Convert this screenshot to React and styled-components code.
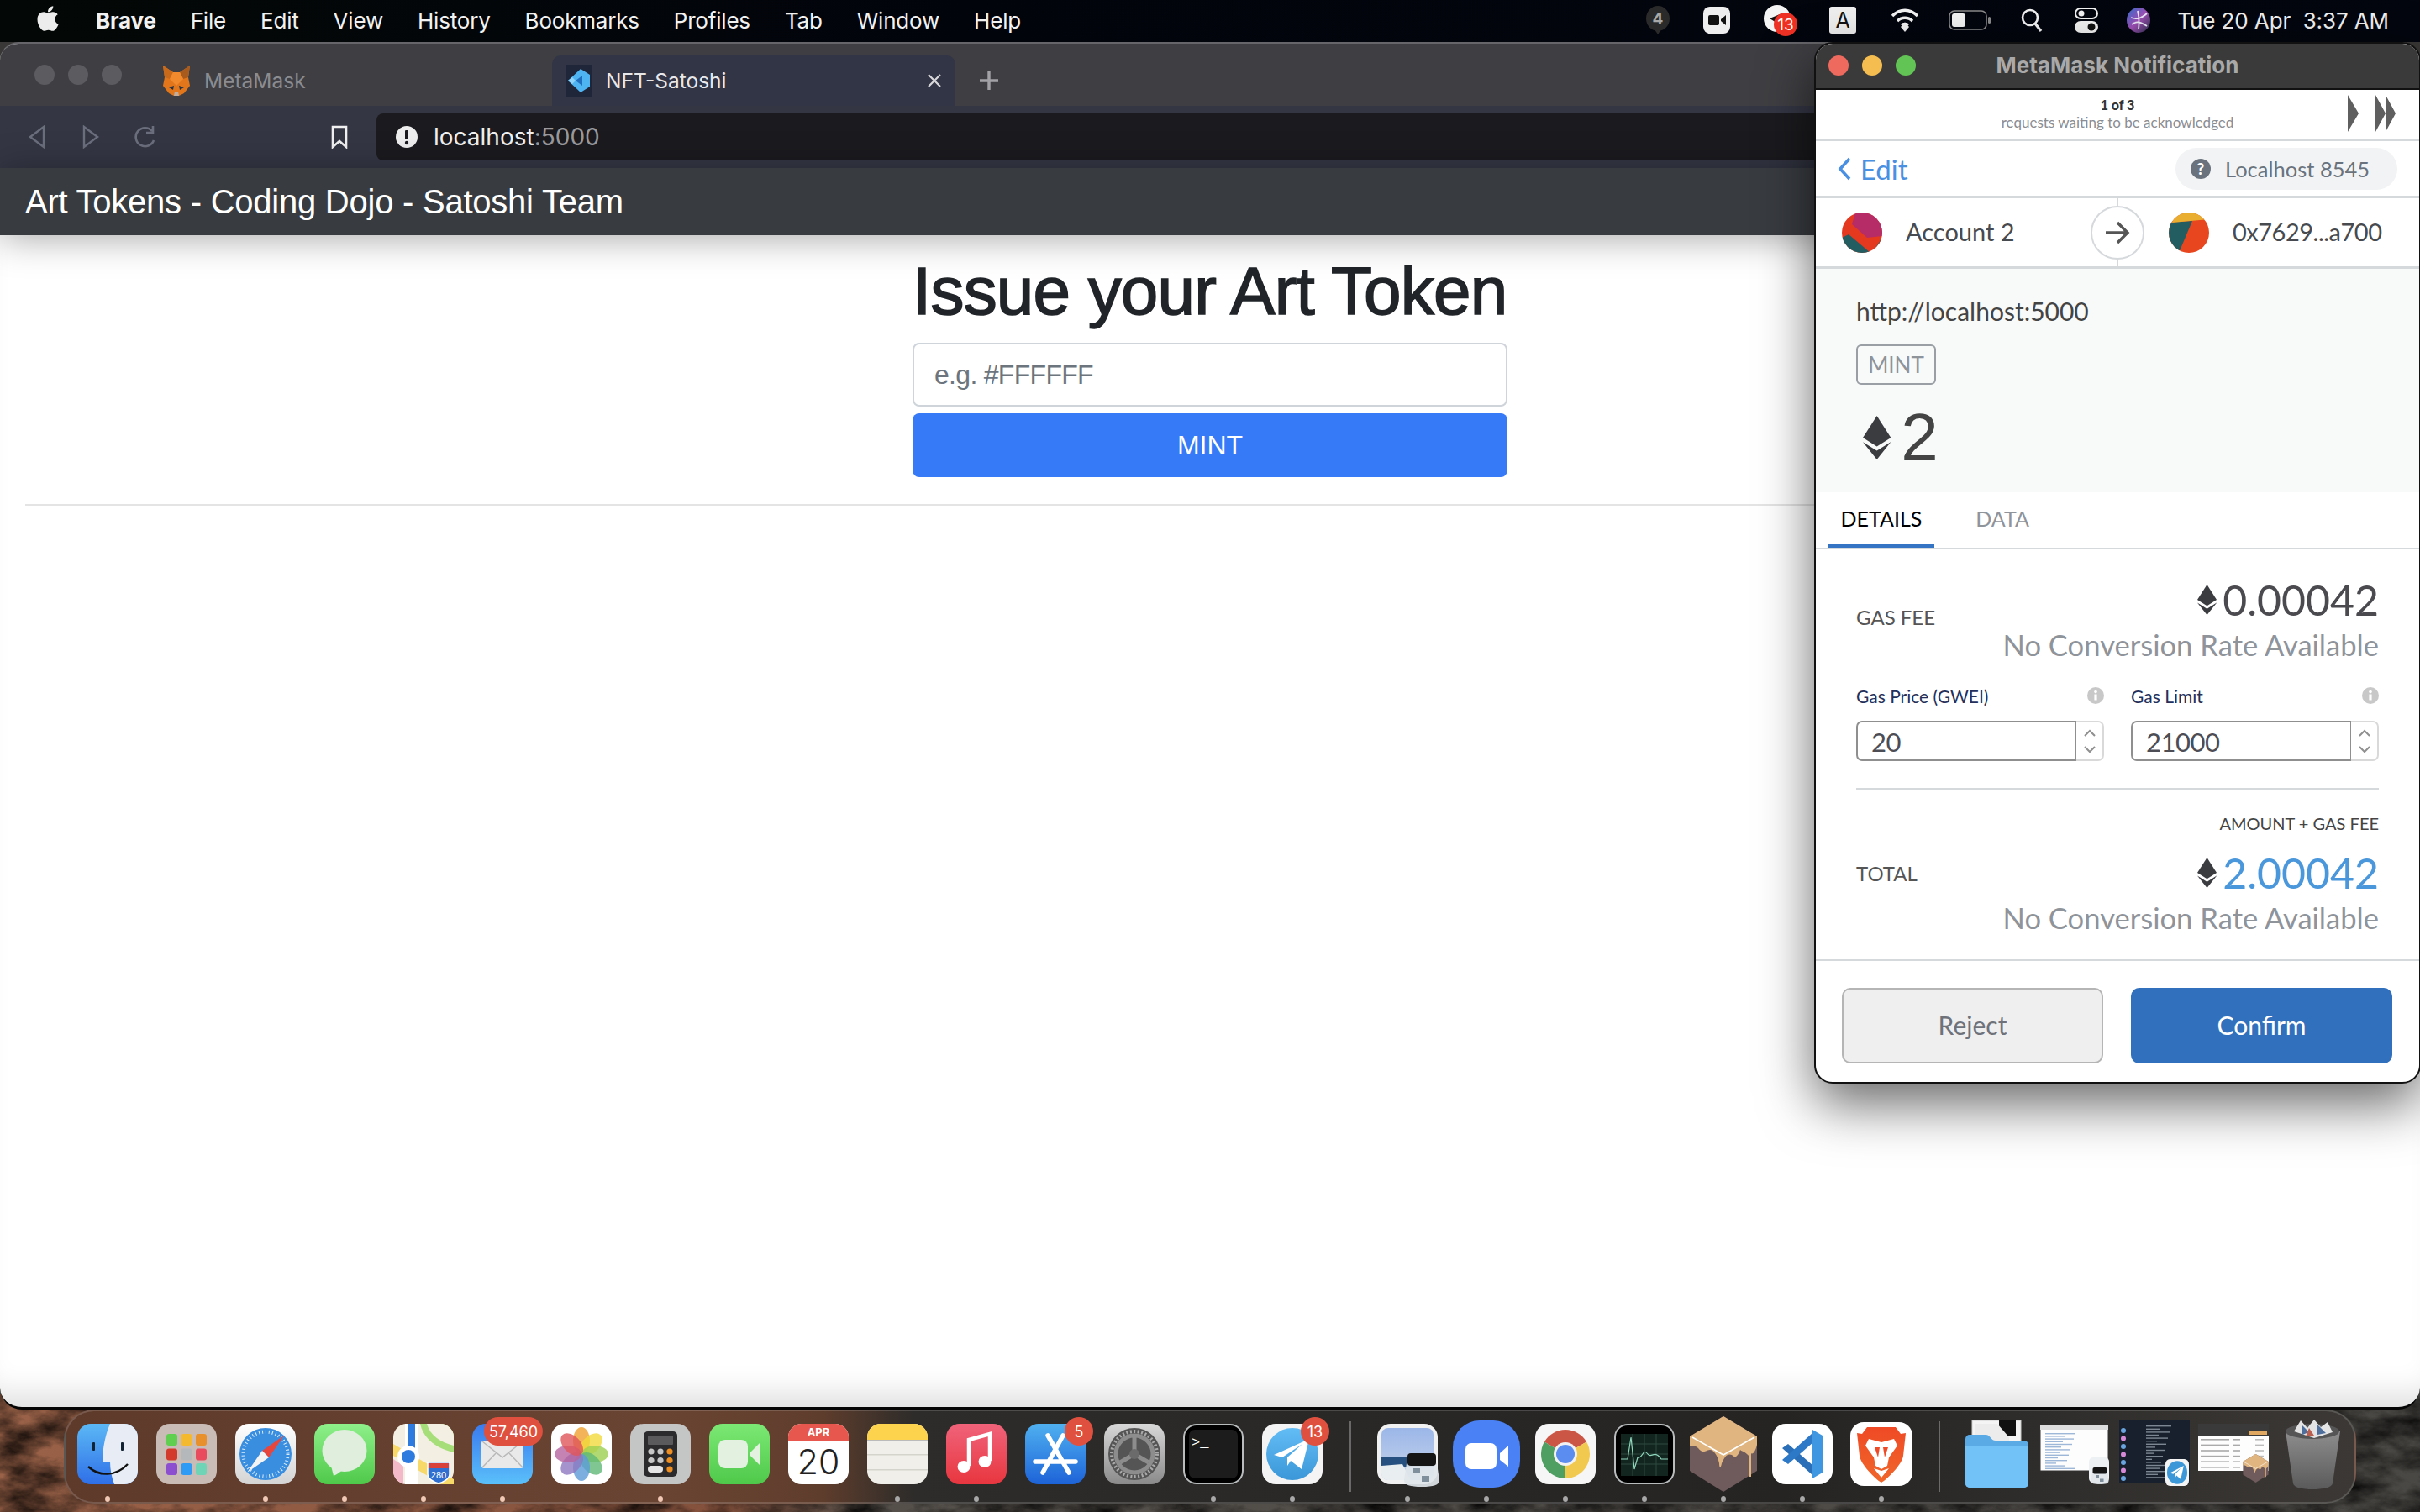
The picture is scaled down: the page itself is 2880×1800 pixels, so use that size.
import React from "react";
import styled, { createGlobalStyle } from "styled-components";
import { FaApple } from "react-icons/fa";

const GlobalStyle = createGlobalStyle`
  html, body { margin: 0; padding: 0; background: #000; }
  * { box-sizing: border-box; }
`;

const SF = `"Inter", "Liberation Sans", sans-serif`;
const HELV = `"Liberation Sans", Arial, sans-serif`;
const EUCLID = `"Lato", "Open Sans", sans-serif`;

const Screen = styled.div`
  position: relative;
  width: 2880px;
  height: 1800px;
  overflow: hidden;
  display: flex;
  flex-direction: column;
  background: #3a3836;
`;
const Wallpaper = styled.svg`
  position: absolute;
  left: 0;
  bottom: 0;
  width: 2880px;
  height: 140px;
`;

/* menu bar */
const MenuBar = styled.div`
  position: relative;
  height: 50px;
  flex: none;
  display: flex;
  align-items: center;
  padding: 0 37px 2px 42px;
  background: linear-gradient(90deg, #030806, #02040c 40%, #04060f);
  color: #f2f2f2;
  font-family: ${SF};
  font-size: 26px;
`;
const AppleMark = styled(FaApple)`
  width: 30px;
  height: 34px;
  margin-right: 42px;
  margin-top: -4px;
  color: #ececec;
`;
const MenuItem = styled.span`
  margin-right: 41px;
  font-weight: ${(p) => (p.$bold ? 700 : 400)};
  letter-spacing: -0.2px;
`;
const Spacer = styled.div`
  flex: 1;
`;
const StatusIcon = styled.svg`
  flex: none;
  margin-left: ${(p) => p.$ml || 0}px;
  overflow: visible;
`;
const Clock = styled.span`
  margin-left: 32px;
  font-size: 26px;
  white-space: pre;
  letter-spacing: -0.1px;
`;

/* browser window */
const BrowserWindow = styled.div`
  position: relative;
  height: 1628px;
  flex: none;
  display: flex;
  flex-direction: column;
  overflow: hidden;
  border-radius: 22px 22px 26px 26px;
  border-top: 2px solid #66666a;
  border-bottom: 3px solid #050505;
  background: #fff;
`;
const TabStrip = styled.div`
  height: 74px;
  flex: none;
  display: flex;
  align-items: flex-end;
  background: #3f3f43;
  font-family: ${SF};
  font-size: 24.5px;
`;
const Lights = styled.div`
  display: flex;
  align-items: center;
  gap: ${(p) => p.$gap}px;
  padding-left: ${(p) => p.$left}px;
  align-self: ${(p) => (p.$self ? p.$self : "auto")};
`;
const Light = styled.i`
  display: block;
  width: 24px;
  height: 24px;
  border-radius: 50%;
  background: ${(p) => p.$c};
`;
const Tab = styled.div`
  display: flex;
  align-items: center;
  height: 60px;
  width: ${(p) => p.$w}px;
  margin-left: ${(p) => p.$ml || 0}px;
  padding-left: ${(p) => p.$pl}px;
  gap: 16px;
  border-radius: 10px 10px 0 0;
  background: ${(p) => (p.$active ? "#323546" : "transparent")};
  color: ${(p) => (p.$active ? "#e8e8ea" : "#8b8b90")};
`;
const TabClose = styled.svg`
  margin-left: auto;
  margin-right: 16px;
`;
const NewTab = styled.svg`
  margin: 0 0 18px 28px;
  align-self: flex-end;
`;
const Toolbar = styled.div`
  height: 74px;
  flex: none;
  display: flex;
  align-items: center;
  background: #343644;
  padding-left: 34px;
`;
const ToolIcon = styled.svg`
  flex: none;
  margin-right: ${(p) => p.$mr}px;
`;
const UrlBar = styled.div`
  flex: 1;
  height: 56px;
  display: flex;
  align-items: center;
  gap: 19px;
  padding-left: 23px;
  border-radius: 8px 0 0 8px;
  background: #1b1b1f;
  font-family: ${SF};
  font-size: 28px;
  color: #f0f0f0;
`;
const UrlPort = styled.span`
  color: #9a9a9e;
`;
const NavBar = styled.div`
  position: relative;
  height: 80px;
  flex: none;
  display: flex;
  align-items: center;
  padding-left: 30px;
  background: #383b40;
  color: #fff;
  font-family: ${HELV};
  font-size: 40px;
  letter-spacing: -0.24px;
  box-shadow: 0 4px 44px rgba(0, 0, 0, 0.34);
`;
const Page = styled.main`
  flex: 1;
  padding: 19px 30px 0;
  font-family: ${HELV};
  box-shadow: inset 0 -40px 36px -24px rgba(0, 0, 0, 0.13);
`;
const Form = styled.div`
  width: 708px;
  margin: 0 auto;
  display: flex;
  flex-direction: column;
`;
const Heading = styled.h1`
  margin: 0 0 13px;
  font-size: 80px;
  line-height: 96px;
  font-weight: 400;
  color: #212529;
  white-space: nowrap;
  letter-spacing: -0.8px;
  -webkit-text-stroke: 1.6px #212529;
`;
const ColorInput = styled.input`
  height: 76px;
  padding: 0 24px;
  border: 2px solid #ced4da;
  border-radius: 8px;
  font-family: ${HELV};
  font-size: 32px;
  letter-spacing: -0.7px;
  &::placeholder {
    color: #6c757d;
    opacity: 1;
  }
`;
const MintButton = styled.button`
  height: 76px;
  margin-top: 8px;
  border: 0;
  border-radius: 8px;
  background: #377af7;
  color: #fff;
  font-family: ${HELV};
  font-size: 32px;
`;
const Rule = styled.hr`
  margin: 32px 0 0;
  border: 0;
  border-top: 2px solid #e4e4e4;
`;

/* metamask popup */
const Popup = styled.div`
  position: absolute;
  left: 2159px;
  top: 50px;
  width: 722px;
  height: 1240px;
  display: flex;
  flex-direction: column;
  overflow: hidden;
  border: 2px solid #111;
  border-radius: 22px;
  background: #fff;
  font-family: ${EUCLID};
  box-shadow: 0 24px 64px rgba(0, 0, 0, 0.6);
`;
const TitleBar = styled.div`
  position: relative;
  height: 55px;
  flex: none;
  display: flex;
  align-items: center;
  justify-content: center;
  padding-bottom: 3px;
  background: #3a3a3a;
  border-bottom: 2px solid #111;
  color: #a9a9a9;
  font-family: ${SF};
  font-weight: 700;
  font-size: 26px;
`;
const TitleLights = styled(Lights)`
  position: absolute;
  left: 0;
  top: 14px;
`;
const QueueRow = styled.div`
  position: relative;
  height: 61px;
  flex: none;
  display: flex;
  flex-direction: column;
  align-items: center;
  justify-content: center;
  border-bottom: 3px solid #d6d9dc;
`;
const QueueCount = styled.div`
  font-size: 16px;
  line-height: 20px;
  font-weight: 900;
  color: #333;
`;
const QueueText = styled.div`
  font-size: 17px;
  line-height: 22px;
  color: #8a8d92;
`;
const QueueArrows = styled.svg`
  position: absolute;
  left: 633px;
  top: 6px;
`;
const EditRow = styled.div`
  height: 68px;
  flex: none;
  display: flex;
  align-items: center;
  justify-content: space-between;
  padding: 0 26px 0 25px;
  border-bottom: 3px solid #d6d9dc;
`;
const EditLink = styled.div`
  display: flex;
  align-items: center;
  gap: 10px;
  color: #4a90e2;
  font-size: 33px;
`;
const NetworkPill = styled.div`
  width: 264px;
  height: 50px;
  display: flex;
  align-items: center;
  gap: 17px;
  padding-left: 18px;
  border-radius: 25px;
  background: #f2f3f4;
  color: #6a737d;
  font-size: 25.5px;
`;
const SenderRow = styled.div`
  position: relative;
  height: 84px;
  flex: none;
  display: grid;
  grid-template-columns: 327px 64px 1fr;
  align-items: center;
  border-bottom: 3px solid #d6d9dc;
  color: #474b4f;
  font-size: 29px;
  &::before {
    content: "";
    position: absolute;
    left: 358px;
    top: 0;
    bottom: 0;
    width: 2px;
    background: #d6d9dc;
  }
`;
const Party = styled.div`
  display: flex;
  align-items: center;
  gap: 28px;
  padding-left: ${(p) => p.$left}px;
`;
const PartyName = styled.span`
  margin-top: -2px;
  letter-spacing: ${(p) => p.$ls || 0}px;
`;
const ArrowCircle = styled.div`
  position: relative;
  width: 64px;
  height: 64px;
  display: flex;
  align-items: center;
  justify-content: center;
  border: 2px solid #d6d9dc;
  border-radius: 50%;
  background: #fff;
`;
const Summary = styled.div`
  height: 266px;
  flex: none;
  padding: 32px 48px 0;
  background: #f8f9f9;
  color: #444;
`;
const Origin = styled.div`
  font-size: 30px;
  line-height: 36px;
`;
const MethodTag = styled.div`
  width: 95px;
  height: 48px;
  margin-top: 22px;
  display: flex;
  align-items: center;
  justify-content: center;
  border: 2px solid #9a9fa6;
  border-radius: 6px;
  color: #8f939a;
  font-size: 26px;
`;
const BigAmount = styled.div`
  display: flex;
  align-items: center;
  gap: 12px;
  height: 70px;
  margin-top: 28px;
  padding-left: 8px;
  font-size: 80px;
  font-family: ${HELV};
`;
const TabsRow = styled.div`
  height: 68px;
  flex: none;
  display: flex;
  padding-left: 15px;
  border-bottom: 2px solid #d6d9dc;
`;
const DetailTab = styled.div`
  height: 66px;
  width: ${(p) => p.$w}px;
  margin-left: ${(p) => p.$ml || 0}px;
  display: flex;
  align-items: center;
  justify-content: center;
  border-bottom: 4px solid ${(p) => (p.$active ? "#3574c4" : "transparent")};
  color: ${(p) => (p.$active ? "#000" : "#8f939a")};
  font-size: 25px;
`;
const Details = styled.div`
  flex: none;
  height: 488px;
  padding: 35px 48px 0 48px;
`;
const FeeRow = styled.div`
  display: flex;
  justify-content: space-between;
  align-items: center;
`;
const FeeLabel = styled.div`
  margin-bottom: ${(p) => p.$mb}px;
  color: #555;
  font-size: 24px;
`;
const FeeValues = styled.div`
  display: flex;
  flex-direction: column;
  align-items: flex-end;
`;
const FeeAmount = styled.div`
  height: 50px;
  display: flex;
  align-items: center;
  gap: 7px;
  color: ${(p) => p.$c};
  font-size: 50px;
`;
const FeeNote = styled.div`
  height: 40px;
  margin-top: 9px;
  line-height: 40px;
  color: #8f939a;
  font-size: 34.6px;
`;
const GasGrid = styled.div`
  display: grid;
  grid-template-columns: 295px 295px;
  justify-content: space-between;
  margin-top: 25px;
`;
const GasHead = styled.div`
  height: 30px;
  display: flex;
  align-items: center;
  justify-content: space-between;
  color: #24305a;
  font-size: 21px;
`;
const NumberBox = styled.div`
  display: flex;
  height: 48px;
  margin-top: 15px;
`;
const NumberInput = styled.input`
  width: 262px;
  border: 2px solid #8f8f8f;
  border-right-width: 1px;
  border-radius: 7px 0 0 7px;
  padding: 2px 0 0 16px;
  color: #4d4d55;
  background: #fff;
  font-family: ${EUCLID};
  font-size: 31px;
  letter-spacing: -0.5px;
`;
const Spinner = styled.div`
  width: 33px;
  display: flex;
  flex-direction: column;
  align-items: center;
  justify-content: center;
  gap: 11px;
  border: 2px solid #d9d9d9;
  border-left: 0;
  border-radius: 0 7px 7px 0;
`;
const Divider = styled.div`
  height: 2px;
  margin-top: 32px;
  background: #d6d9dc;
`;
const SumCaption = styled.div`
  height: 30px;
  margin: 25px 0 19px;
  line-height: 30px;
  text-align: right;
  color: #444;
  font-size: 20px;
`;
const Footer = styled.div`
  flex: none;
  display: grid;
  grid-template-columns: 311px 311px;
  justify-content: space-between;
  padding: 32px 32px 0 31px;
  border-top: 2px solid #d6d9dc;
`;
const ActionButton = styled.button`
  height: 90px;
  padding-bottom: 4px;
  border: 2px solid ${(p) => (p.$primary ? "#3170bd" : "#b5b5b5")};
  border-radius: 10px;
  background: ${(p) => (p.$primary ? "#3170bd" : "#efefef")};
  color: ${(p) => (p.$primary ? "#fff" : "#6e727a")};
  font-family: ${EUCLID};
  font-size: 30px;
`;

/* dock */
const Dock = styled.div`
  position: relative;
  align-self: center;
  display: flex;
  height: 112px;
  margin-top: 0;
  padding: 1px 3px 0;
  border: 2px solid rgba(255, 255, 255, 0.16);
  border-radius: 36px;
  background: linear-gradient(90deg, #5e3a2b 0, #6a4433 26%, #5f3d2c 33%, #2e2c2a 37%, #252423 75%, #3b3835 100%);
`;
const Slot = styled.div`
  position: relative;
  width: 94px;
  display: flex;
  flex-direction: column;
  align-items: center;
`;
const IconArea = styled.div`
  height: 100px;
  display: flex;
  align-items: center;
  justify-content: center;
`;
const DockDot = styled.i`
  width: 6px;
  height: 7px;
  border-radius: 50%;
  background: ${(p) => (p.$warm ? "#f0c8b4" : "#a8a8a8")};
  visibility: ${(p) => (p.$on ? "visible" : "hidden")};
`;
const DockBadge = styled.span`
  position: absolute;
  top: 6px;
  left: 50%;
  transform: translateX(calc(-50% + ${(p) => p.$shift}px));
  min-width: 34px;
  height: 34px;
  padding: 0 6px;
  display: flex;
  align-items: center;
  justify-content: center;
  border-radius: 17px;
  background: #e0503f;
  color: #fff;
  font-family: ${SF};
  font-size: 18px;
`;
const DockSeparator = styled.div`
  width: 43px;
  display: flex;
  justify-content: center;
  &::after {
    content: "";
    display: block;
    width: 2px;
    height: 84px;
    margin-top: 11px;
    background: rgba(255, 255, 255, 0.3);
  }
`;

/* drawings */
const Eth = ({ h = 50 }) => (
  <svg width={h * 0.64} height={h} viewBox="0 0 32 50">
    <polygon points="16,0 32,25 16,35 0,25" fill="#3b3c3f" />
    <polygon points="0,30 16,40 32,30 16,50" fill="#3b3c3f" />
  </svg>
);

const Fox = () => (
  <svg width="34" height="36" viewBox="0 0 34 36">
    <polygon points="1,0 13,8 21,8 33,0 31,14 33,24 26,33 20,36 14,36 8,33 1,24 3,14" fill="#e2761b" />
    <polygon points="1,0 13,8 9,16 3,14" fill="#c96a1b" />
    <polygon points="33,0 21,8 25,16 31,14" fill="#a95b1e" />
    <polygon points="13,8 21,8 25,16 17,24 9,16" fill="#f08a2c" />
    <polygon points="14,36 20,36 19,31 15,31" fill="#c0ad9e" />
    <polygon points="8,26 14,24 13,29" fill="#233447" />
    <polygon points="26,26 20,24 21,29" fill="#233447" />
  </svg>
);

const VsTab = () => (
  <svg width="32" height="38" viewBox="0 0 32 38">
    <rect width="32" height="38" fill="#20263a" />
    <polygon points="3,19 18,5 29,12 29,26 18,33" fill="#4fb4f2" />
    <polygon points="12,19 20,13 20,25" fill="#1f6fbe" />
    <polygon points="3,19 8,15 12,19 8,23" fill="#8fd4fa" />
  </svg>
);

const Avatar = ({ a }) => (
  <svg width="48" height="48" viewBox="0 0 48 48">
    <defs>
      <clipPath id={`av${a}`}>
        <circle cx="24" cy="24" r="24" />
      </clipPath>
    </defs>
    {a === 1 ? (
      <g clipPath="url(#av1)">
        <rect width="48" height="48" fill="#e4391f" />
        <polygon points="16,0 48,0 48,28 30,30 12,14" fill="#b62c67" />
        <polygon points="0,30 8,26 34,48 0,48" fill="#235d61" />
        <polygon points="36,48 48,30 48,48" fill="#235d61" />
      </g>
    ) : (
      <g clipPath="url(#av2)">
        <rect width="48" height="48" fill="#e8461f" />
        <polygon points="0,12 28,10 12,48 0,48" fill="#235d61" />
        <polygon points="4,12 8,0 48,0 48,8 26,10" fill="#e9ae2f" />
      </g>
    )}
  </svg>
);

const Squircle = ({ fill, children, w = 72, h = 72, r = 16 }) => (
  <svg width={w} height={h} viewBox={`0 0 ${w} ${h}`} style={{ overflow: "visible" }}>
    <rect width={w} height={h} rx={r} fill={fill} />
    {children}
  </svg>
);

const Grad = ({ id, a, b }) => (
  <defs>
    <linearGradient id={id} x1="0" y1="0" x2="0" y2="1">
      <stop offset="0" stopColor={a} />
      <stop offset="1" stopColor={b} />
    </linearGradient>
  </defs>
);

const Finder = () => (
  <Squircle fill="url(#gFinder)">
    <Grad id="gFinder" a="#5bb8f5" b="#2f6fe8" />
    <path d="M39 0C33 14 30 30 30 45H39C39 55 41 64 44 72H56A16 16 0 0 0 72 56V16A16 16 0 0 0 56 0Z" fill="#e8edf5" />
    <rect x="18" y="22" width="3" height="10" rx="1" fill="#123" />
    <rect x="52" y="22" width="3" height="10" rx="1" fill="#123" />
    <path d="M13 51C26 63 46 63 60 48" fill="none" stroke="#111" strokeWidth="2.4" />
  </Squircle>
);

const Launchpad = () => {
  const cols = ["#5fcf4f", "#f5b92f", "#e8902c", "#d33a2c", "#b5b8ba", "#ea4a5e", "#8b4fd0", "#2f9bf5", "#6fd4b5"];
  return (
    <Squircle fill="#c9bbb5">
      {cols.map((c, i) => (
        <rect key={c} x={12 + (i % 3) * 17.5} y={12 + Math.floor(i / 3) * 17.5} width="13" height="14" rx="3" fill={c} />
      ))}
    </Squircle>
  );
};

const Safari = () => (
  <Squircle fill="url(#gSafari)">
    <Grad id="gSafari" a="#ffffff" b="#d4d4d4" />
    <circle cx="36" cy="36" r="31" fill="#3a8ee0" />
    <circle cx="36" cy="36" r="26.5" fill="none" stroke="#dfeefa" strokeWidth="4" strokeDasharray="1 3" />
    <polygon points="58,14 40,40 32,32" fill="#e8453c" />
    <polygon points="14,58 40,40 32,32" fill="#f4f4f4" />
  </Squircle>
);

const Messages = () => (
  <Squircle fill="url(#gMsg)">
    <Grad id="gMsg" a="#8ef08a" b="#4fc94a" />
    <ellipse cx="36" cy="32" rx="26.5" ry="25" fill="#dfeedd" />
    <path d="M20 50L23 62C28 60 31 57 33 55Z" fill="#dfeedd" />
  </Squircle>
);

const Maps = () => (
  <Squircle fill="#f3efe2">
    <path d="M32 0H56A16 16 0 0 1 72 16V34C52 30 36 18 32 0Z" fill="#a6de7a" />
    <path d="M40 0H56A16 16 0 0 1 72 16V26C56 22 44 14 40 0Z" fill="#f3efe2" />
    <path d="M0 24L72 66V72H58L0 38Z" fill="#f7d96a" />
    <path d="M0 42L12 50V72H16A16 16 0 0 1 0 56Z" fill="#f4b9c8" />
    <rect x="14" y="0" width="16" height="72" fill="#fff" />
    <rect x="18" y="0" width="8" height="46" fill="#2e7be0" />
    <circle cx="18" cy="39" r="13" fill="#fff" />
    <circle cx="18" cy="39" r="8" fill="#2e7be0" />
    <path d="M41 46H67V60C67 66 58 70 54 71C50 70 41 66 41 60Z" fill="#2e6fd0" stroke="#fff" strokeWidth="1.5" />
    <rect x="42" y="47" width="24" height="6" fill="#d8403a" />
    <text x="54" y="65" fontSize="11" fontFamily={HELV} fill="#fff" textAnchor="middle">280</text>
  </Squircle>
);

const Mail = () => (
  <Squircle fill="url(#gMail)">
    <Grad id="gMail" a="#3a7aef" b="#5ac0fa" />
    <rect x="11" y="20" width="50" height="33" rx="3" fill="#e9e9e9" />
    <path d="M12 21L36 40L60 21M12 52L29 34M60 52L43 34" fill="none" stroke="#b8b8b8" strokeWidth="1.4" />
  </Squircle>
);

const Photos = () => {
  const cols = ["#f0a030", "#f3d93c", "#9dcf50", "#5fb878", "#5b9bd8", "#8f78c0", "#b5649f", "#e0555a"];
  return (
    <Squircle fill="#fff">
      {cols.map((c, i) => (
        <ellipse key={c} cx="36" cy="20" rx="10" ry="16" fill={c} opacity="0.8" transform={`rotate(${i * 45} 36 36)`} />
      ))}
    </Squircle>
  );
};

const Calculator = () => (
  <Squircle fill="#c4c5c5">
    <rect x="16" y="9" width="40" height="54" rx="5" fill="#2b2b2d" />
    <rect x="21" y="14" width="30" height="11" rx="1" fill="#5a5a5c" />
    {[0, 1].map((r) =>
      [0, 1, 2].map((c) => (
        <circle key={`${r}${c}`} cx={25 + c * 11} cy={33 + r * 10.5} r="3.6" fill={c === 2 ? "#ef8f22" : "#c8c8c8"} />
      ))
    )}
    <rect x="21" y="50" width="18" height="8" rx="4" fill="#e5e5e5" />
    <circle cx="47" cy="54" r="3.6" fill="#ef8f22" />
  </Squircle>
);

const FaceTime = () => (
  <Squircle fill="url(#gFt)">
    <Grad id="gFt" a="#7be874" b="#4fc94a" />
    <rect x="11" y="19" width="35" height="34" rx="8" fill="#e3f1e0" />
    <path d="M49 34L60 23V49L49 38Z" fill="#e3f1e0" />
  </Squircle>
);

const Calendar = () => (
  <Squircle fill="#fff">
    <path d="M0 20V16A16 16 0 0 1 16 0H56A16 16 0 0 1 72 16V20Z" fill="#e8574d" />
    <text x="36" y="15" fontSize="13" fontWeight="700" fontFamily={SF} fill="#fff" textAnchor="middle">APR</text>
    <text x="36" y="60" fontSize="41" fontWeight="300" fontFamily={SF} fill="#222" textAnchor="middle">20</text>
  </Squircle>
);

const Notes = () => (
  <Squircle fill="#f0efe9">
    <path d="M0 19V16A16 16 0 0 1 16 0H56A16 16 0 0 1 72 16V19Z" fill="#fdd34d" />
    <rect y="19" width="72" height="2" fill="#bbb" />
    <rect y="36" width="72" height="1.5" fill="#d4d3cc" />
    <rect y="54" width="72" height="1.5" fill="#d4d3cc" />
  </Squircle>
);

const Music = () => (
  <Squircle fill="url(#gMusic)">
    <Grad id="gMusic" a="#f0637a" b="#e8363f" />
    <path d="M27 50V19L52 12V44" fill="none" stroke="#fff" strokeWidth="4.5" />
    <ellipse cx="21" cy="51" rx="7.5" ry="7" fill="#fff" />
    <ellipse cx="46" cy="45" rx="7.5" ry="7" fill="#fff" />
  </Squircle>
);

const AppStore = () => (
  <Squircle fill="url(#gApp)">
    <Grad id="gApp" a="#4fb0f0" b="#1d63d8" />
    <path d="M27 14L52 58M45 14L21 58M12 45H60" fill="none" stroke="#fff" strokeWidth="5.5" strokeLinecap="round" />
  </Squircle>
);

const SysPrefs = () => (
  <Squircle fill="url(#gSys)">
    <Grad id="gSys" a="#d8d8d8" b="#8a8a8a" />
    <circle cx="36" cy="36" r="31" fill="#555" />
    <circle cx="36" cy="36" r="27" fill="none" stroke="#aaa" strokeWidth="4" strokeDasharray="2 2.5" />
    <circle cx="36" cy="36" r="22" fill="none" stroke="#8d8d8d" strokeWidth="5" />
    <path d="M36 36V16M36 36L19 46M36 36L53 46" stroke="#8d8d8d" strokeWidth="5" />
    <circle cx="36" cy="36" r="6" fill="#6b6b6b" />
  </Squircle>
);

const Terminal = () => (
  <Squircle fill="#000">
    <rect x="1" y="1" width="70" height="70" rx="15" fill="#000" stroke="#b9bcbc" strokeWidth="2" />
    <rect x="7" y="7" width="58" height="58" rx="7" fill="#1c1c1c" />
    <text x="10" y="27" fontSize="17" fontFamily={`"Liberation Mono", monospace`} fill="#fff">&gt;_</text>
  </Squircle>
);

const Plane = () => (
  <polygon points="14,37 56,18 47,54 34,44 30,50 30,40 48,24 24,40" fill="#fff" />
);

const Telegram = () => (
  <Squircle fill="#f4f4f4">
    <Grad id="gTg" a="#62bcf5" b="#3b97d8" />
    <circle cx="36" cy="36" r="31" fill="url(#gTg)" />
    <Plane />
  </Squircle>
);

const Loupe = ({ x, y, s = 1 }) => (
  <g transform={`translate(${x} ${y}) scale(${s})`}>
    <path d="M4 12H40L43 32C43 38 36 40 22 40C8 40 1 38 1 32Z" fill="#dfe6ea" opacity="0.92" />
    <rect x="12" y="18" width="8" height="6" fill="#7f8f9c" />
    <rect x="22" y="27" width="9" height="7" fill="#7f8f9c" />
    <rect x="5" y="0" width="34" height="15" rx="4" fill="#151515" />
  </g>
);

const Preview = () => (
  <Squircle fill="#f1f1f1">
    <Grad id="gPv" a="#9bb6e8" b="#c8d6ec" />
    <rect x="5" y="5" width="62" height="62" rx="8" fill="url(#gPv)" />
    <rect x="5" y="40" width="62" height="12" fill="#25507f" />
    <path d="M5 50L30 48L40 67H13A8 8 0 0 1 5 59Z" fill="#e9eef0" />
    <Loupe x="31" y="35" />
  </Squircle>
);

const ZoomApp = () => (
  <Squircle fill="#4a82f5" w={80} h={80} r={32}>
    <rect x="15" y="27" width="37" height="31" rx="7" fill="#fff" />
    <path d="M56 39L66 30V55L56 47Z" fill="#fff" />
  </Squircle>
);

const Chrome = () => (
  <Squircle fill="#f6f6f6">
    <path d="M36 36L10.9 21.5A29 29 0 0 1 61.1 21.5Z" fill="#cc5645" />
    <path d="M36 36L61.1 21.5A29 29 0 0 1 36 65Z" fill="#f2c94f" />
    <path d="M36 36L36 65A29 29 0 0 1 10.9 21.5Z" fill="#4f9e62" />
    <circle cx="36" cy="36" r="14" fill="#f2f2f2" />
    <circle cx="36" cy="36" r="11" fill="#5b8df0" />
  </Squircle>
);

const Activity = () => (
  <Squircle fill="#000">
    <rect x="1" y="1" width="70" height="70" rx="15" fill="#000" stroke="#b9bcbc" strokeWidth="2" />
    <rect x="8" y="12" width="56" height="50" fill="#12251f" />
    <path d="M8 24H64M8 36H64M8 48H64M22 12V62M36 12V62M50 12V62" stroke="#2d4b41" strokeWidth="1" />
    <path d="M8 42H16L20 16L24 54L28 40C34 42 34 28 40 36C44 42 48 30 56 42H64" fill="none" stroke="#8fd8bd" strokeWidth="1.2" />
  </Squircle>
);

const HexPaint = ({ w = 80, h = 90 }) => (
  <svg width={w} height={h} viewBox="0 0 80 90" style={{ overflow: "visible" }}>
    <polygon points="40,0 80,24 80,65 40,90 0,65 0,24" fill="#6f5a5c" />
    <path d="M40 0L80 24V34C78 42 75 46 73 44V72H71V48C66 42 62 42 60 40C58 44 56 52 50 46C44 44 42 48 38 56C37 62 35 62 35 56C33 46 28 40 24 40C20 40 16 46 10 38C6 34 2 36 0 36V24Z" fill="#e0b57f" />
    <path d="M3 25L40 46L77 25" fill="none" stroke="#fff" strokeWidth="1.6" />
  </svg>
);

const VsCode = () => (
  <Squircle fill="#fff">
    <polygon points="12,29 19,24 49,50 48,61" fill="#2a6fb8" />
    <polygon points="12,43 19,48 49,22 48,11" fill="#2d79c7" />
    <polygon points="48,7 60,14 60,58 48,65" fill="#3e97e0" />
  </Squircle>
);

const Brave = () => (
  <Squircle fill="#fff" w={74} h={76}>
    <Grad id="gBr" a="#ef4a25" b="#f0662a" />
    <path d="M20 6H54L60 14L66 13L63 40C62 50 44 68 37 72C30 68 12 50 11 40L8 13L14 14Z" fill="url(#gBr)" />
    <path d="M22 20L37 24L52 20L56 28L46 42L44 52L37 56L30 52L28 42L18 28Z" fill="#fff" />
    <path d="M29 30H35L33 42ZM45 30H39L41 42Z" fill="#ef4a25" />
    <polygon points="37,58 46,55 37,66 28,55" fill="#fff" />
  </Squircle>
);

const Folder = () => (
  <svg width="75" height="80" viewBox="0 0 75 80">
    <rect x="8" y="0" width="58" height="48" fill="#f4f4f4" stroke="#ccc" />
    <path d="M40 0H60V18H40Z" fill="#111" />
    <path d="M12 4H38L52 20V34H12Z" fill="#ececec" />
    <path d="M0 22A5 5 0 0 1 5 17H24C30 17 30 24 36 24H70A5 5 0 0 1 75 29V75A5 5 0 0 1 70 80H5A5 5 0 0 1 0 75Z" fill="#5aaae6" />
    <path d="M0 30H75V75A5 5 0 0 1 70 80H5A5 5 0 0 1 0 75Z" fill="#72c2f8" />
  </svg>
);

const DocLines = ({ x, y, rows, gap, w, c }) =>
  Array.from({ length: rows }).map((_, i) => (
    <rect key={i} x={x} y={y + i * gap} width={w - ((i * 13) % 24)} height="1.4" fill={c} />
  ));

const ThumbCode = () => (
  <svg width="84" height="80" viewBox="0 0 84 80" style={{ overflow: "visible" }}>
    <rect x="0" y="6" width="81" height="54" fill="#fdfdfd" stroke="#333" strokeWidth="1" />
    <rect x="0" y="6" width="81" height="5" fill="#ddd" />
    <DocLines x={6} y={15} rows={14} gap={3.2} w={36} c="#9db7d8" />
    <rect x="58" y="44" width="24" height="30" rx="5" fill="#eef1f3" />
    <Loupe x="60" y="56" s="0.5" />
  </svg>
);

const ThumbChat = () => (
  <svg width="84" height="80" viewBox="0 0 84 80" style={{ overflow: "visible" }}>
    <rect x="0" y="0" width="84" height="74" fill="#17202c" />
    {[0, 1, 2, 3, 4, 5, 6].map((i) => (
      <circle key={i} cx="5" cy={12 + i * 9.5} r="3" fill={i % 2 ? "#d68ad6" : "#6aa5e0"} />
    ))}
    <DocLines x={32} y={6} rows={18} gap={3.6} w={30} c="#7d8794" />
    <svg x="55" y="46" width="28" height="32" viewBox="0 0 72 72" preserveAspectRatio="none">
      <rect width="72" height="72" rx="14" fill="#f4f4f4" />
      <circle cx="36" cy="36" r="31" fill="#3b97d8" />
      <Plane />
    </svg>
  </svg>
);

const ThumbTable = () => (
  <svg width="84" height="80" viewBox="0 0 84 80" style={{ overflow: "visible" }}>
    <rect x="0" y="4" width="84" height="56" fill="#fdfdfd" />
    <rect x="0" y="4" width="84" height="14" fill="#3a3a3a" />
    <rect x="60" y="12" width="22" height="5" fill="#e0a860" />
    {[0, 1, 2, 3, 4, 5].map((i) => (
      <g key={i}>
        <rect x="3" y={22 + i * 6.6} width="34" height="1.6" fill="#aaa" />
        <rect x="42" y={22 + i * 6.6} width="8" height="1.6" fill="#aaa" />
        <rect x="68" y={22 + i * 6.6} width="10" height="1.6" fill="#bbb" />
      </g>
    ))}
    <svg x="53" y="40" width="31" height="34" viewBox="0 0 80 90" style={{ overflow: "visible" }}>
      <HexPaint />
    </svg>
  </svg>
);

const Trash = () => (
  <svg width="65" height="83" viewBox="0 0 65 83">
    <Grad id="gTr" a="#8d8d8d" b="#5a5a5a" />
    <path d="M0 14H65L56 76C55 81 44 83 32 83C20 83 10 81 9 76Z" fill="url(#gTr)" />
    <ellipse cx="32" cy="14" rx="32" ry="9" fill="#555" />
    <path d="M10 14L18 1L26 10L34 0L42 9L50 3L56 15L34 22Z" fill="#e4e4e4" />
    <path d="M20 7L28 15L20 18ZM38 6L48 16L38 18Z" fill="#4e6f9c" />
    <path d="M28 10L34 19L24 20Z" fill="#b85f50" />
  </svg>
);

const dockLeft = [
  { id: "finder", Icon: Finder, dot: true },
  { id: "launchpad", Icon: Launchpad },
  { id: "safari", Icon: Safari, dot: true },
  { id: "messages", Icon: Messages, dot: true },
  { id: "maps", Icon: Maps, dot: true },
  { id: "mail", Icon: Mail, dot: true, badge: "57,460", shift: 13 },
  { id: "photos", Icon: Photos },
  { id: "calc", Icon: Calculator, dot: true },
  { id: "facetime", Icon: FaceTime },
  { id: "calendar", Icon: Calendar },
  { id: "notes", Icon: Notes, dot: true },
  { id: "music", Icon: Music, dot: true },
  { id: "appstore", Icon: AppStore, badge: "5", shift: 28 },
  { id: "prefs", Icon: SysPrefs },
  { id: "terminal", Icon: Terminal, dot: true },
  { id: "telegram", Icon: Telegram, dot: true, badge: "13", shift: 27 },
];
const dockMiddle = [
  { id: "preview", Icon: Preview, dot: true },
  { id: "zoom", Icon: ZoomApp, dot: true },
  { id: "chrome", Icon: Chrome, dot: true },
  { id: "activity", Icon: Activity, dot: true },
  { id: "hex", Icon: HexPaint, dot: true },
  { id: "vscode", Icon: VsCode, dot: true },
  { id: "brave", Icon: Brave, dot: true },
];
const dockRight = [
  { id: "folder", Icon: Folder },
  { id: "thumb1", Icon: ThumbCode },
  { id: "thumb2", Icon: ThumbChat },
  { id: "thumb3", Icon: ThumbTable },
  { id: "trash", Icon: Trash },
];

const DockSlot = ({ item, warm }) => (
  <Slot>
    <IconArea>
      <item.Icon />
    </IconArea>
    <DockDot $on={item.dot} $warm={warm} />
    {item.badge && <DockBadge $shift={item.shift}>{item.badge}</DockBadge>}
  </Slot>
);

const InfoDot = () => (
  <svg width="20" height="20" viewBox="0 0 20 20">
    <circle cx="10" cy="10" r="10" fill="#c8c8c8" />
    <rect x="8.4" y="8.5" width="3.2" height="7" fill="#fff" />
    <circle cx="10" cy="5.6" r="1.8" fill="#fff" />
  </svg>
);

const Chev = ({ up }) => (
  <svg width="14" height="9" viewBox="0 0 14 9">
    <path d={up ? "M1 8L7 2L13 8" : "M1 1L7 7L13 1"} fill="none" stroke="#8f8f8f" strokeWidth="2" />
  </svg>
);

const GasField = ({ label, value }) => (
  <div>
    <GasHead>
      {label}
      <InfoDot />
    </GasHead>
    <NumberBox>
      <NumberInput readOnly value={value} />
      <Spinner>
        <Chev up />
        <Chev />
      </Spinner>
    </NumberBox>
  </div>
);

export default function App() {
  return (
    <Screen>
      <GlobalStyle />
      <Wallpaper viewBox="0 0 2880 140" preserveAspectRatio="none">
        <defs>
          <linearGradient id="wall" x1="0" y1="0" x2="1" y2="0">
            <stop offset="0" stopColor="#9a6248" />
            <stop offset="0.3" stopColor="#84513c" />
            <stop offset="0.36" stopColor="#55504a" />
            <stop offset="1" stopColor="#4a4844" />
          </linearGradient>
          <filter id="rock" x="0" y="0" width="100%" height="100%">
            <feTurbulence type="fractalNoise" baseFrequency="0.018 0.035" numOctaves="5" seed="7" />
            <feColorMatrix values="0 0 0 0 0  0 0 0 0 0  0 0 0 0 0  1.7 0 0 0 -0.55" />
          </filter>
        </defs>
        <rect width="2880" height="140" fill="url(#wall)" />
        <rect width="2880" height="140" filter="url(#rock)" />
      </Wallpaper>

      <MenuBar>
        <AppleMark />
        <MenuItem $bold>Brave</MenuItem>
        <MenuItem>File</MenuItem>
        <MenuItem>Edit</MenuItem>
        <MenuItem>View</MenuItem>
        <MenuItem>History</MenuItem>
        <MenuItem>Bookmarks</MenuItem>
        <MenuItem>Profiles</MenuItem>
        <MenuItem>Tab</MenuItem>
        <MenuItem>Window</MenuItem>
        <MenuItem>Help</MenuItem>
        <Spacer />
        <StatusIcon width="28" height="34" viewBox="0 0 28 34">
          <ellipse cx="14" cy="15" rx="14" ry="15" fill="#2a2a2a" />
          <path d="M10 28L14 34L18 28Z" fill="#2a2a2a" />
          <text x="14" y="22" fontSize="19" fontWeight="700" fontFamily={SF} fill="#a8a8a8" textAnchor="middle">4</text>
        </StatusIcon>
        <StatusIcon $ml={40} width="32" height="32" viewBox="0 0 32 32">
          <rect width="32" height="32" rx="8" fill="#eee" />
          <rect x="6" y="10" width="13" height="12" rx="2" fill="#111" />
          <path d="M21 15L27 10V22L21 17Z" fill="#111" />
        </StatusIcon>
        <StatusIcon $ml={40} width="40" height="36" viewBox="0 0 40 36">
          <circle cx="16" cy="16" r="16" fill="#f4f4f4" />
          <path d="M7 16L24 9L20 24Z" fill="#111" />
          <circle cx="26" cy="23" r="14" fill="#ee3124" />
          <text x="26" y="30" fontSize="19" fontFamily={SF} fill="#fff" textAnchor="middle">13</text>
        </StatusIcon>
        <StatusIcon $ml={38} width="32" height="32" viewBox="0 0 32 32">
          <rect width="32" height="32" rx="3" fill="#eee" />
          <text x="16" y="25" fontSize="25" fontFamily={SF} fill="#111" textAnchor="middle">A</text>
        </StatusIcon>
        <StatusIcon $ml={41} width="34" height="28" viewBox="0 0 34 28">
          <path d="M2 9C11 0 23 0 32 9M8 15C13 10 21 10 26 15M13 20C15 18 19 18 21 20" fill="none" stroke="#f2f2f2" strokeWidth="3.4" />
          <path d="M12 22L17 16.5L22 22L17 28Z" fill="#f2f2f2" />
        </StatusIcon>
        <StatusIcon $ml={35} width="50" height="24" viewBox="0 0 50 24">
          <rect x="1" y="1" width="44" height="22" rx="6" fill="none" stroke="#8a8a8a" strokeWidth="1.6" />
          <rect x="4" y="4" width="16" height="16" rx="3" fill="#f2f2f2" />
          <rect x="47" y="8" width="3" height="8" rx="1.5" fill="#8a8a8a" />
        </StatusIcon>
        <StatusIcon $ml={36} width="26" height="28" viewBox="0 0 26 28">
          <circle cx="11" cy="11" r="9" fill="none" stroke="#f2f2f2" strokeWidth="2.6" />
          <path d="M17 18L24 27" stroke="#f2f2f2" strokeWidth="3.2" />
        </StatusIcon>
        <StatusIcon $ml={38} width="28" height="30" viewBox="0 0 28 30">
          <rect x="1" y="1" width="26" height="12" rx="6" fill="none" stroke="#f2f2f2" strokeWidth="2" />
          <circle cx="8" cy="7" r="3.5" fill="#f2f2f2" />
          <rect x="0" y="16" width="28" height="14" rx="7" fill="#f2f2f2" />
          <circle cx="20" cy="23" r="4.5" fill="#111" />
        </StatusIcon>
        <StatusIcon $ml={34} width="28" height="30" viewBox="0 0 28 30">
          <defs>
            <linearGradient id="siri" x1="0" y1="0" x2="1" y2="1">
              <stop offset="0" stopColor="#2f6fd0" />
              <stop offset="0.5" stopColor="#a04fb5" />
              <stop offset="1" stopColor="#28304a" />
            </linearGradient>
          </defs>
          <ellipse cx="14" cy="15" rx="14" ry="15" fill="url(#siri)" />
          <path d="M5 12C12 14 16 14 24 7M6 20C12 15 18 18 24 22M13 4C15 12 15 18 14 26" fill="none" stroke="#e8e8f5" strokeWidth="1.8" />
        </StatusIcon>
        <Clock>{"Tue 20 Apr  3:37 AM"}</Clock>
      </MenuBar>

      <BrowserWindow>
        <TabStrip>
          <Lights $gap={16} $left={41} $self="center">
            <Light $c="#5b5b60" />
            <Light $c="#5b5b60" />
            <Light $c="#5b5b60" />
          </Lights>
          <Tab $w={496} $ml={48} $pl={0}>
            <Fox />
            MetaMask
          </Tab>
          <Tab $w={480} $ml={-32} $pl={16} $active>
            <VsTab />
            NFT-Satoshi
            <TabClose width="18" height="18" viewBox="0 0 18 18">
              <path d="M2 2L16 16M16 2L2 16" stroke="#d8d8da" strokeWidth="2.2" />
            </TabClose>
          </Tab>
          <NewTab width="24" height="24" viewBox="0 0 24 24">
            <path d="M12 1V23M1 12H23" stroke="#a2a2a6" strokeWidth="3.4" />
          </NewTab>
        </TabStrip>
        <Toolbar>
          <ToolIcon $mr={44} width="20" height="28" viewBox="0 0 20 28">
            <path d="M18 2V26L2 14Z" fill="none" stroke="#6b6e7c" strokeWidth="2.4" />
          </ToolIcon>
          <ToolIcon $mr={40} width="20" height="28" viewBox="0 0 20 28">
            <path d="M2 2V26L18 14Z" fill="none" stroke="#6b6e7c" strokeWidth="2.4" />
          </ToolIcon>
          <ToolIcon $mr={208} width="28" height="28" viewBox="0 0 28 28">
            <path d="M23 7A11 11 0 1 0 25 18M24 1V9H16" fill="none" stroke="#6b6e7c" strokeWidth="2.6" />
          </ToolIcon>
          <ToolIcon $mr={34} width="20" height="28" viewBox="0 0 20 28">
            <path d="M2 2H18V26L10 19L2 26Z" fill="none" stroke="#f0f0f0" strokeWidth="2.6" />
          </ToolIcon>
          <UrlBar>
            <svg width="26" height="26" viewBox="0 0 26 26">
              <circle cx="13" cy="13" r="13" fill="#eee" />
              <rect x="11" y="5" width="4" height="11" rx="1" fill="#1b1b1f" />
              <circle cx="13" cy="20" r="2.2" fill="#1b1b1f" />
            </svg>
            <span>
              localhost<UrlPort>:5000</UrlPort>
            </span>
          </UrlBar>
        </Toolbar>
        <NavBar>Art Tokens - Coding Dojo - Satoshi Team</NavBar>
        <Page>
          <Form>
            <Heading>Issue your Art Token</Heading>
            <ColorInput placeholder="e.g. #FFFFFF" />
            <MintButton>MINT</MintButton>
          </Form>
          <Rule />
        </Page>
      </BrowserWindow>

      <Dock>
        {dockLeft.map((item, i) => (
          <DockSlot key={item.id} item={item} warm={i < 9} />
        ))}
        <DockSeparator />
        {dockMiddle.map((item) => (
          <DockSlot key={item.id} item={item} />
        ))}
        <DockSeparator />
        {dockRight.map((item) => (
          <DockSlot key={item.id} item={item} />
        ))}
      </Dock>

      <Popup>
        <TitleBar>
          <TitleLights $gap={16} $left={15}>
            <Light $c="#ee6a5f" />
            <Light $c="#f5bd4f" />
            <Light $c="#61c454" />
          </TitleLights>
          MetaMask Notification
        </TitleBar>
        <QueueRow>
          <QueueCount>1 of 3</QueueCount>
          <QueueText>requests waiting to be acknowledged</QueueText>
          <QueueArrows width="60" height="44" viewBox="0 0 60 44">
            <path d="M0 0L13 22L0 44ZM33 0L45 22L33 44ZM45 0L57 22L45 44Z" fill="#5f5f5f" />
          </QueueArrows>
        </QueueRow>
        <EditRow>
          <EditLink>
            <svg width="18" height="28" viewBox="0 0 18 28">
              <path d="M15 2L4 14L15 26" fill="none" stroke="#4a90e2" strokeWidth="3.6" />
            </svg>
            Edit
          </EditLink>
          <NetworkPill>
            <svg width="24" height="24" viewBox="0 0 24 24">
              <circle cx="12" cy="12" r="12" fill="#6a737d" />
              <text x="12" y="18.5" fontSize="18" fontWeight="900" fontFamily={EUCLID} fill="#fff" textAnchor="middle">?</text>
            </svg>
            Localhost 8545
          </NetworkPill>
        </EditRow>
        <SenderRow>
          <Party $left={31}>
            <Avatar a={1} />
            <PartyName>Account 2</PartyName>
          </Party>
          <ArrowCircle>
            <svg width="30" height="28" viewBox="0 0 30 28">
              <path d="M1 14H27M15 2L27 14L15 26" fill="none" stroke="#555" strokeWidth="3.4" />
            </svg>
          </ArrowCircle>
          <Party $left={29}>
            <Avatar a={2} />
            <PartyName $ls={-0.5}>0x7629...a700</PartyName>
          </Party>
        </SenderRow>
        <Summary>
          <Origin>http://localhost:5000</Origin>
          <MethodTag>MINT</MethodTag>
          <BigAmount>
            <Eth h={52} />2
          </BigAmount>
        </Summary>
        <TabsRow>
          <DetailTab $w={126} $active>DETAILS</DetailTab>
          <DetailTab $w={62} $ml={50}>DATA</DetailTab>
        </TabsRow>
        <Details>
          <FeeRow>
            <FeeLabel $mb={9}>GAS FEE</FeeLabel>
            <FeeValues>
              <FeeAmount $c="#4a4a4f">
                <Eth h={36} />
                0.00042
              </FeeAmount>
              <FeeNote>No Conversion Rate Available</FeeNote>
            </FeeValues>
          </FeeRow>
          <GasGrid>
            <GasField label="Gas Price (GWEI)" value="20" />
            <GasField label="Gas Limit" value="21000" />
          </GasGrid>
          <Divider />
          <SumCaption>AMOUNT + GAS FEE</SumCaption>
          <FeeRow>
            <FeeLabel $mb={48}>TOTAL</FeeLabel>
            <FeeValues>
              <FeeAmount $c="#4a97dc">
                <Eth h={36} />
                2.00042
              </FeeAmount>
              <FeeNote>No Conversion Rate Available</FeeNote>
            </FeeValues>
          </FeeRow>
        </Details>
        <Footer>
          <ActionButton>Reject</ActionButton>
          <ActionButton $primary>Confirm</ActionButton>
        </Footer>
      </Popup>
    </Screen>
  );
}
